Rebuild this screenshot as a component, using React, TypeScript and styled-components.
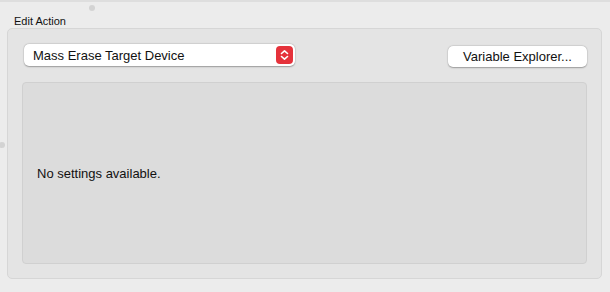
import React from 'react';
import styled, { createGlobalStyle } from 'styled-components';

const GlobalStyle = createGlobalStyle`
  html, body {
    margin: 0;
    padding: 0;
    background: #ececec;
    font-family: "Liberation Sans", Arial, sans-serif;
    color: #1d1d1d;
  }
`;

const Page = styled.div`
  width: 610px;
  height: 292px;
  position: relative;
  box-sizing: border-box;
  border-top: 2px solid #dedede;
  padding: 12px 8px 0 7px;
  overflow: hidden;
`;

const Dot = styled.div<{ $left: number; $top: number }>`
  position: absolute;
  left: ${(p) => p.$left}px;
  top: ${(p) => p.$top}px;
  width: 6px;
  height: 6px;
  border-radius: 50%;
  background: #d3d3d3;
`;

const Label = styled.div`
  font-size: 11px;
  line-height: 14px;
  padding-left: 7px;
  color: #111;
`;

const GroupBox = styled.div`
  height: 251px;
  box-sizing: border-box;
  background: #e4e4e4;
  border: 1px solid #d6d6d6;
  border-radius: 5px;
  padding: 15px 14px 14px 14px;
  display: flex;
  flex-direction: column;
`;

const Toolbar = styled.div`
  display: flex;
  justify-content: space-between;
  align-items: flex-start;
  padding: 0 0 0 2px;
  height: 38px;
`;

const Popup = styled.div`
  width: 271px;
  height: 22px;
  box-sizing: border-box;
  background: #fff;
  border-radius: 5px;
  box-shadow: 0 0.5px 1.5px rgba(0, 0, 0, 0.3), 0 0 0 0.5px rgba(0, 0, 0, 0.06);
  display: flex;
  align-items: center;
  justify-content: space-between;
  padding: 0 2px 0 9px;
  font-size: 13px;
  color: #111;
`;

const Stepper = styled.div`
  width: 17px;
  height: 18px;
  border-radius: 4px;
  background: #e5323b;
  display: flex;
  align-items: center;
  justify-content: center;
`;

const PushButton = styled.div`
  width: 139px;
  height: 21px;
  margin-top: 2px;
  box-sizing: border-box;
  background: #fff;
  border-radius: 5px;
  box-shadow: 0 0.5px 1.5px rgba(0, 0, 0, 0.3), 0 0 0 0.5px rgba(0, 0, 0, 0.06);
  display: flex;
  align-items: center;
  justify-content: center;
  font-size: 13px;
  color: #111;
`;

const SettingsPane = styled.div`
  flex: 1;
  box-sizing: border-box;
  background: #dcdcdc;
  border: 1px solid #d0d0d0;
  border-radius: 4px;
  display: flex;
  align-items: center;
  padding: 0 0 0 14px;
  font-size: 13px;
  color: #111;
`;

export default function App() {
  return (
    <>
      <GlobalStyle />
      <Page>
        <Dot $left={89} $top={3} />
        <Dot $left={-1} $top={140} />
        <Label>Edit Action</Label>
        <GroupBox>
          <Toolbar>
            <Popup>
              <span>Mass Erase Target Device</span>
              <Stepper>
                <svg width="9" height="12" viewBox="0 0 9 12" fill="none">
                  <path d="M1.5 4.5 L4.5 1.8 L7.5 4.5" stroke="#fff" strokeWidth="1.6" strokeLinecap="round" strokeLinejoin="round" />
                  <path d="M1.5 7.5 L4.5 10.2 L7.5 7.5" stroke="#fff" strokeWidth="1.6" strokeLinecap="round" strokeLinejoin="round" />
                </svg>
              </Stepper>
            </Popup>
            <PushButton>Variable Explorer...</PushButton>
          </Toolbar>
          <SettingsPane>No settings available.</SettingsPane>
        </GroupBox>
      </Page>
    </>
  );
}
